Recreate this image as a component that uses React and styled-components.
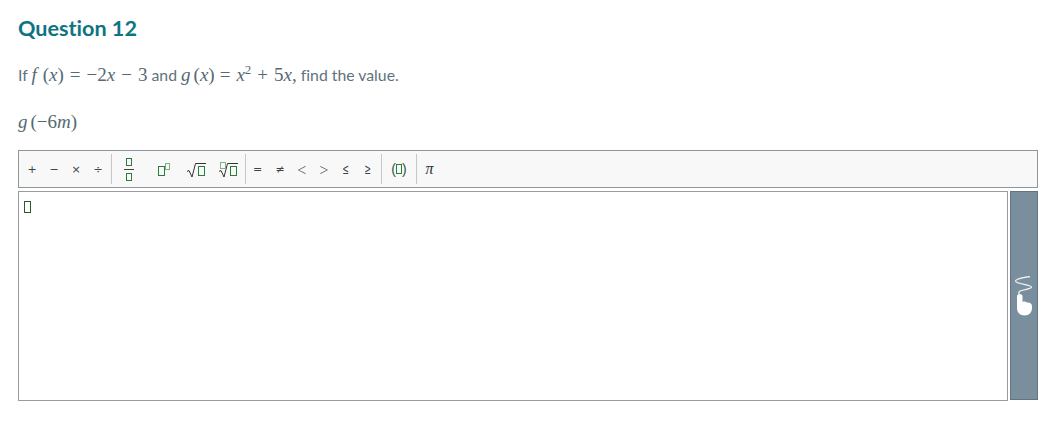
import React from "react";
import styled, { createGlobalStyle } from "styled-components";

const GlobalStyle = createGlobalStyle`
  html, body {
    margin: 0;
    background: #fff;
  }
  body {
    font-family: Lato, "Liberation Sans", sans-serif;
    font-variant-ligatures: none;
  }
`;

const Page = styled.div`
  width: 1056px;
  height: 432px;
  box-sizing: border-box;
  padding: 15px 18px 0;
  overflow: hidden;
`;

const Title = styled.h1`
  margin: 0;
  height: 26px;
  font-size: 21.6px;
  line-height: 26px;
  font-weight: 700;
  color: #0e7482;
`;

const Prompt = styled.p`
  margin: 21px 0 0;
  height: 26px;
  font-size: 15.8px;
  line-height: 26px;
  color: #5f727c;
  white-space: pre;
`;

const Expression = styled(Prompt)`
  margin-top: 22px;
  height: 24px;
  line-height: 24px;
`;

const Math = styled.span`
  font-family: "Liberation Serif", serif;
  font-size: 19px;
  color: #566973;
`;

const Var = styled.i`
  font-style: italic;
`;

const Call = styled.span`
  margin-left: ${(p) => p.$gap}px;
`;

const Op = styled.span`
  margin: 0 ${(p) => p.$r || 6}px 0 ${(p) => p.$l || 6}px;
`;

const Sup = styled.sup`
  font-size: 13px;
  line-height: 0;
  vertical-align: 7px;
`;

const Toolbar = styled.div`
  margin-top: 16px;
  height: 38px;
  box-sizing: border-box;
  display: flex;
  align-items: center;
  padding: 0 0 0 2px;
  background: #f8f8f8;
  border: 1px solid #8f9699;
`;

const Group = styled.div`
  display: flex;
  align-items: center;
  height: 30px;
  padding-right: ${(p) => p.$pad || 0}px;
  border-right: ${(p) => (p.$last ? "none" : "1px solid #c4c8ca")};
`;

const ToolButton = styled.div`
  width: ${(p) => p.$w || 22}px;
  height: 30px;
  flex: none;
  display: flex;
  align-items: center;
  justify-content: center;
  font-family: "DejaVu Sans", sans-serif;
  font-size: 11px;
  color: #3c4448;
`;

const Relation = styled.span`
  display: block;
  font-size: ${(p) => p.$size}px;
  font-weight: 300;
  transform: scaleX(0.72);
`;

const Slot = styled.span`
  display: block;
  flex: none;
  box-sizing: border-box;
  width: ${(p) => p.$w || 6}px;
  height: ${(p) => p.$h || 8}px;
  border: 1px solid ${(p) => (p.$faint ? "#7fb08a" : "#2c7a3c")};
`;

const Fraction = styled.div`
  display: flex;
  flex-direction: column;
  align-items: center;
  gap: 3px;
`;

const FractionBar = styled.span`
  display: block;
  width: 10px;
  height: 1px;
  background: #444;
`;

const Power = styled.div`
  display: flex;
  align-items: flex-start;
`;

const PowerBase = styled(Slot)`
  margin-top: 3px;
`;

const Parens = styled.div`
  display: flex;
  align-items: center;
  font-family: "Liberation Sans", sans-serif;
  font-size: 14px;
  color: #2c5a3c;
`;

const Pi = styled.span`
  font-family: "Liberation Serif", serif;
  font-style: italic;
  font-size: 16px;
  color: #333;
`;

const Workspace = styled.div`
  margin-top: 3px;
  display: flex;
  align-items: flex-start;
  gap: 2px;
`;

const Editor = styled.div`
  width: 990px;
  height: 210px;
  box-sizing: border-box;
  padding: 9px 0 0 5px;
  background: #fff;
  border: 1px solid #989c9e;
`;

const Cursor = styled(Slot)`
  width: 7px;
  height: 12px;
  border-color: #2c5a2c;
`;

const HandwriteButton = styled.div`
  width: 28px;
  height: 209px;
  display: flex;
  align-items: center;
  justify-content: center;
  background: #7a8f9d;
  border: 1px solid #64747f;
  box-sizing: border-box;
`;

const Sqrt = ({ root }) => (
  <svg width="22" height="20" viewBox="0 0 22 20" fill="none">
    <path d="M1 12.5 L3 11.5 L6 18 L9.5 4.5 H20" stroke="#333" strokeWidth="1" />
    <rect x="12.5" y="7.5" width="6" height="9" stroke="#2c7a3c" />
    {root && <rect x="2.5" y="3.5" width="5" height="6" stroke="#7fb08a" />}
  </svg>
);

const Hand = () => (
  <svg width="20" height="40" viewBox="0 0 20 40" fill="none">
    <path
      d="M16 0.5 C9 1.5 1.5 3 1.5 5 C1.5 8 17.5 8.5 17.5 11 C17.5 13.5 6 13.5 5 16 C4.6 17 5 18 5.5 19"
      stroke="#eef1f2"
      strokeWidth="1.3"
    />
    <path
      d="M3 20 C3 17.5 8.5 17.5 8.5 20 V26 C10 25.3 12 25.5 13 26.5 C15.5 26 18 27.5 18 30 V32 C18 36.5 15 39.5 10.5 39.5 C6 39.5 3 36.5 3 32 Z"
      fill="#fff"
    />
  </svg>
);

const App = () => (
  <Page>
    <GlobalStyle />
    <Title>Question 12</Title>
    <Prompt>
      If <Math><Var>f</Var><Call $gap={6}>(<Var>x</Var>)</Call><Op>=</Op>−2<Var>x</Var><Op>−</Op>3</Math> and{" "}
      <Math><Var>g</Var><Call $gap={3}>(<Var>x</Var>)</Call><Op $l={5}>=</Op><Var>x</Var><Sup>2</Sup><Op>+</Op>5<Var>x</Var>,</Math> find the value.
    </Prompt>
    <Expression>
      <Math><Var>g</Var><Call $gap={3}>(−6<Var>m</Var>)</Call></Math>
    </Expression>
    <Toolbar>
      <Group $pad={2}>
        {["+", "−", "×", "÷"].map((s) => (
          <ToolButton key={s}>{s}</ToolButton>
        ))}
      </Group>
      <Group>
        <ToolButton $w={34}>
          <Fraction>
            <Slot />
            <FractionBar />
            <Slot />
          </Fraction>
        </ToolButton>
        <ToolButton $w={35}>
          <Power>
            <PowerBase $w={7} $h={10} />
            <Slot $w={5} $h={7} $faint />
          </Power>
        </ToolButton>
        <ToolButton $w={31}>
          <Sqrt />
        </ToolButton>
        <ToolButton $w={33}>
          <Sqrt root />
        </ToolButton>
      </Group>
      <Group $pad={2}>
        <ToolButton $w={23}>=</ToolButton>
        <ToolButton>≠</ToolButton>
        <ToolButton><Relation $size={16}>{"<"}</Relation></ToolButton>
        <ToolButton><Relation $size={16}>{">"}</Relation></ToolButton>
        <ToolButton><Relation $size={14}>≤</Relation></ToolButton>
        <ToolButton><Relation $size={14}>≥</Relation></ToolButton>
      </Group>
      <Group>
        <ToolButton $w={34}>
          <Parens>
            (<Slot $w={6} $h={10} />)
          </Parens>
        </ToolButton>
      </Group>
      <Group $last>
        <ToolButton $w={25}>
          <Pi>π</Pi>
        </ToolButton>
      </Group>
    </Toolbar>
    <Workspace>
      <Editor>
        <Cursor />
      </Editor>
      <HandwriteButton>
        <Hand />
      </HandwriteButton>
    </Workspace>
  </Page>
);

export default App;
